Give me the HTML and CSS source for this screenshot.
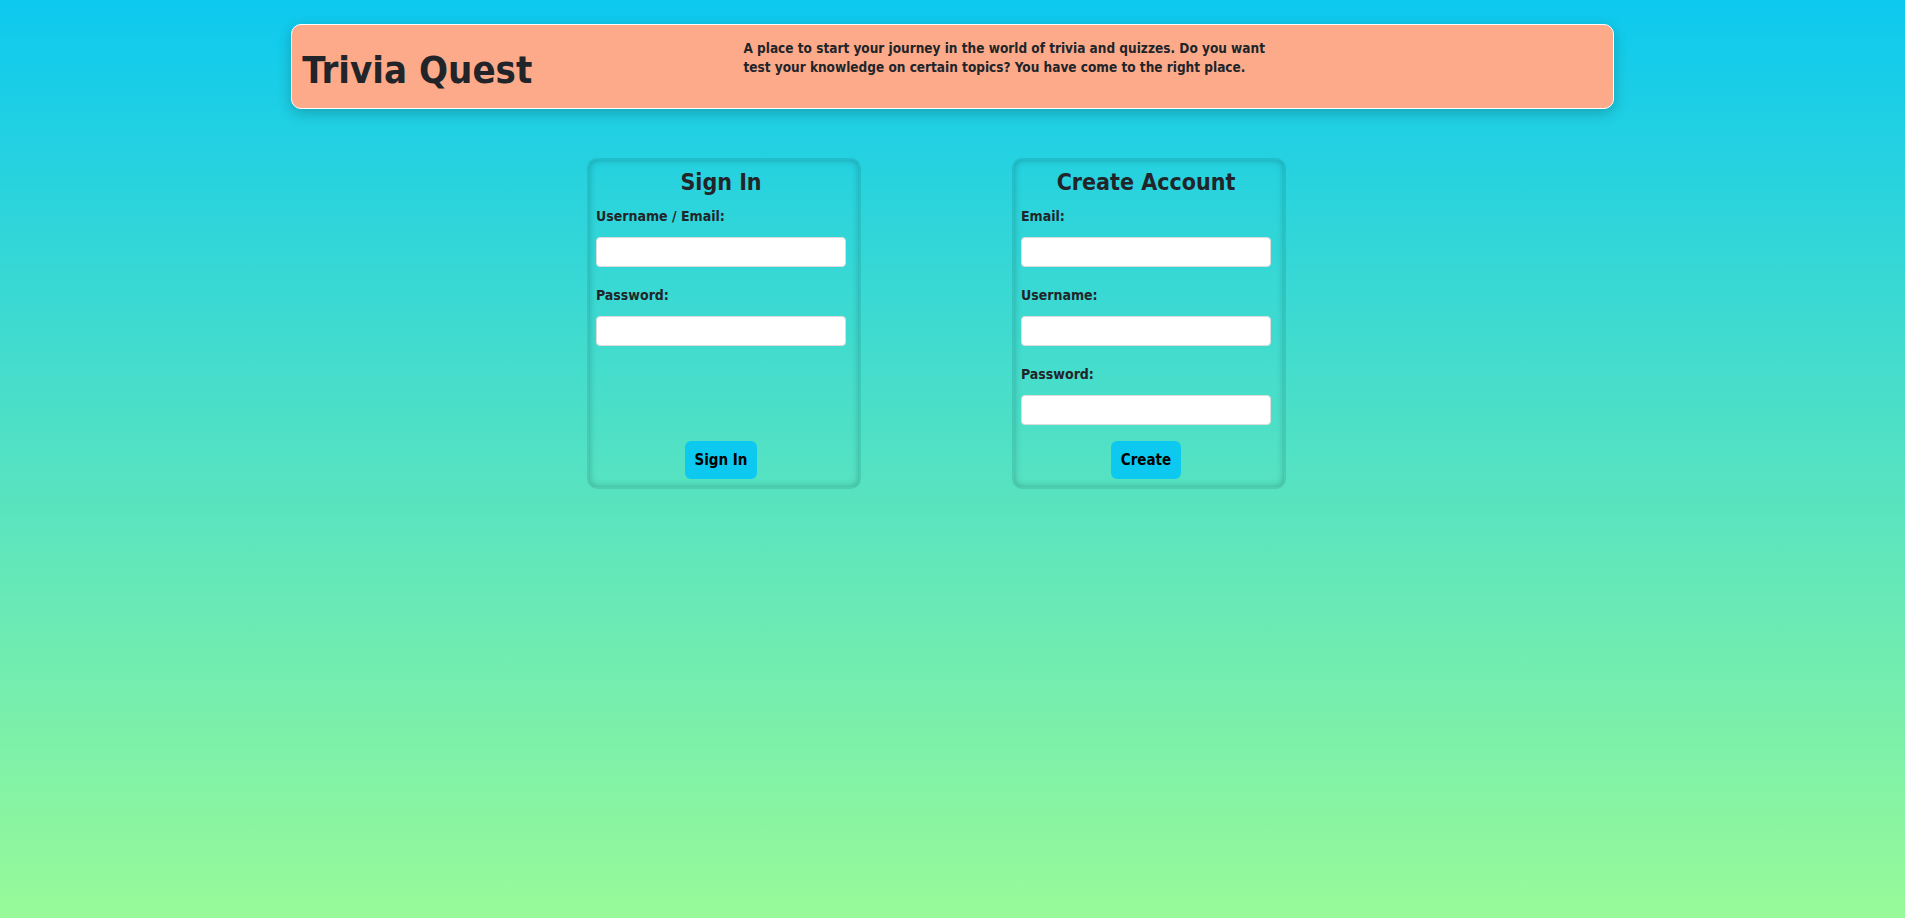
FILE: index.html
```html
<!DOCTYPE html>
<html lang="en">
<head>
<meta charset="utf-8">
<title>Trivia Quest</title>
<link rel="stylesheet" href="styles.css">
</head>
<body>
<header class="banner">
  <h1 class="banner-title">Trivia Quest</h1>
  <p class="banner-text">A place to start your journey in the world of trivia and quizzes. Do you want test your knowledge on certain topics? You have come to the right place.</p>
</header>
<main class="forms">
  <form class="card">
    <h2 class="card-title">Sign In</h2>
    <div class="field">
      <label class="field-label">Username / Email:</label>
      <input class="field-input" type="text">
    </div>
    <div class="field">
      <label class="field-label">Password:</label>
      <input class="field-input" type="password">
    </div>
    <button class="btn" type="button">Sign In</button>
  </form>
  <form class="card">
    <h2 class="card-title">Create Account</h2>
    <div class="field">
      <label class="field-label">Email:</label>
      <input class="field-input" type="text">
    </div>
    <div class="field">
      <label class="field-label">Username:</label>
      <input class="field-input" type="text">
    </div>
    <div class="field">
      <label class="field-label">Password:</label>
      <input class="field-input" type="password">
    </div>
    <button class="btn" type="button">Create</button>
  </form>
</main>
</body>
</html>
```
FILE: styles.css
```css
html {
  min-height: 100%;
  background: linear-gradient(180deg, #0dc9ef 0%, #98fa98 100%);
}
body {
  margin: 0;
  padding: 24px 8px 0;
  min-height: 100vh;
  box-sizing: border-box;
  font-family: "DejaVu Sans Condensed", "Liberation Sans", sans-serif;
  font-weight: bold;
  color: #212529;
}
.banner {
  width: 70%;
  margin: 0 auto;
  height: 85px;
  box-sizing: border-box;
  display: grid;
  grid-template-columns: 1fr 2fr;
  background: #fdaa8b;
  border: 1px solid #ffffff;
  border-radius: 10px;
  box-shadow: 0 4px 14px rgba(0, 0, 0, 0.22);
}
.banner-title {
  margin: 0;
  padding: 6px 0 0 10px;
  align-self: center;
  font-size: 38px;
  line-height: 1;
}
.banner-text {
  margin: 14px 0 0 11px;
  max-width: 522px;
  font-size: 13.5px;
  line-height: 19px;
}
.forms {
  display: flex;
  gap: 151px;
  padding-left: 579px;
  margin-top: 49px;
}
.card {
  width: 274px;
  box-sizing: border-box;
  display: flex;
  flex-direction: column;
  padding: 0 13px 8px 7px;
  border: 2px solid rgba(0, 60, 60, 0.12);
  border-radius: 10px;
  box-shadow: inset 0 0 7px rgba(0, 60, 60, 0.35);
}
.card-title {
  margin: 8px 0 11px;
  font-size: 23px;
  line-height: 28px;
  text-align: center;
}
.field {
  display: flex;
  flex-direction: column;
  gap: 12px;
  margin-bottom: 19px;
}
.field:last-of-type {
  margin-bottom: 16px;
}
.field-label {
  font-size: 14px;
  line-height: 18px;
}
.field-input {
  width: 250px;
  height: 30px;
  box-sizing: border-box;
  margin: 0;
  border: 1px solid #dcdcdc;
  border-radius: 4px;
  background: #ffffff;
}
.btn {
  margin-top: auto;
  align-self: center;
  height: 38px;
  padding: 0 10px;
  border: none;
  border-radius: 6px;
  background: #0dc9ef;
  color: #000000;
  font-family: inherit;
  font-weight: bold;
  font-size: 15px;
}
```
